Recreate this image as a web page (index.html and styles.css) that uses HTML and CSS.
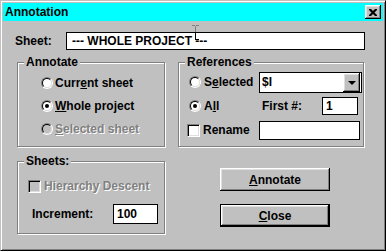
FILE: index.html
```html
<!DOCTYPE html>
<html>
	<head>
		<meta charset="UTF-8">
		<title>Annotation</title>
		<link rel="stylesheet" href="styles.css">
	</head>
	<body>
		<div class="window">
			<div class="titlebar">
				<span class="title">Annotation</span>
				<span class="close-btn">
					<svg width="8" height="7" viewBox="0 0 8 7"><path d="M0 0h2l2 2 2-2h2v1l-2.5 2.5 2.5 2.5v1h-2l-2-2-2 2h-2v-1l2.5-2.5-2.5-2.5z" fill="#000"/></svg>
				</span>
			</div>
			<div class="content">
				<div class="sheet-row">
					<span class="sheet-label">Sheet:</span>
					<div class="field sheet-field">--- WHOLE PROJECT ---</div>
				</div>
				<div class="grid">
					<div class="group">
						<span class="legend">Annotate</span>
						<div class="opts">
							<div class="opt"><span class="radio"></span><span>Curr<u>e</u>nt sheet</span></div>
							<div class="opt"><span class="radio on"></span><span><u>W</u>hole project</span></div>
							<div class="opt dis"><span class="radio off"></span><span><u>S</u>elected sheet</span></div>
						</div>
					</div>
					<div class="group">
						<span class="legend">References</span>
						<div class="refs">
							<div class="opt"><span class="radio"></span><span>S<u>e</u>lected</span></div>
							<div class="combo">
								<span class="combo-text">$I</span>
								<span class="combo-btn"><span class="arrow"></span></span>
							</div>
							<div class="opt"><span class="radio on"></span><span>A<u>l</u>l</span></div>
							<div class="first">
								<span class="first-label">First #:</span>
								<div class="field first-field">1</div>
							</div>
							<div class="opt check-opt"><span class="check"></span><span>Rename</span></div>
							<div class="field rename-field"></div>
						</div>
					</div>
					<div class="group">
						<span class="legend">Sheets:</span>
						<div class="sheets">
							<div class="opt check-opt dis"><span class="check off"></span><span>Hierarchy Descent</span></div>
							<div class="inc-row">
								<span class="inc-label">Increment:</span>
								<div class="field inc-field">100</div>
							</div>
						</div>
					</div>
					<div class="buttons">
						<div class="btn"><span><u>A</u>nnotate</span></div>
						<div class="btn default"><span><u>C</u>lose</span></div>
					</div>
				</div>
			</div>
			<svg class="ibeam" width="9" height="18" viewBox="0 0 9 18">
				<rect x="1" y="1" width="3" height="1" fill="#808080"/>
				<rect x="5" y="1" width="3" height="1" fill="#808080"/>
				<rect x="4" y="2" width="1" height="6" fill="#808080"/>
				<rect x="4" y="8" width="1" height="8" fill="#000"/>
				<rect x="5" y="15" width="3" height="1" fill="#000"/>
			</svg>
		</div>
	</body>
</html>
```
FILE: styles.css
```css
*{
	margin: 0;
	padding: 0;
	box-sizing: border-box;
}
body{
	background: #c0c0c0;
	font: bold 12px "Liberation Sans", Arial, sans-serif;
	color: #000;
}
.window{
	position: relative;
	width: 386px;
	height: 251px;
	background: #c0c0c0;
	border: 1px solid;
	border-color: #c0c0c0 #000 #000 #c0c0c0;
	box-shadow: inset 1px 1px 0 #fff, inset -1px -1px 0 #808080;
	padding: 2px;
}
.titlebar{
	height: 18px;
	background: #00ffff;
	display: flex;
	align-items: center;
	justify-content: space-between;
	padding: 0 2px;
}
.title{
	line-height: 18px;
}
.close-btn{
	width: 16px;
	height: 14px;
	display: flex;
	align-items: center;
	justify-content: center;
	background: #c0c0c0;
	box-shadow: inset -1px -1px 0 #000, inset 1px 1px 0 #fff, inset -2px -2px 0 #808080, inset 2px 2px 0 #dfdfdf;
}
.content{
	padding: 11px 0 0 12px;
}
.sheet-row{
	display: flex;
	align-items: center;
	height: 18px;
}
.sheet-label{
	width: 51px;
}
.field{
	background: #fff;
	border: 1px solid #000;
	height: 18px;
	line-height: 16px;
	padding-left: 5px;
}
.sheet-field{
	width: 299px;
}
.grid{
	display: grid;
	grid-template-columns: 148px 186px;
	grid-template-rows: 85px 73px;
	column-gap: 13px;
	row-gap: 14px;
	margin: 12px 0 0 2px;
}
.group{
	position: relative;
	border: 1px solid #808080;
	box-shadow: 1px 1px 0 #fff, inset 1px 1px 0 #fff;
}
.legend{
	position: absolute;
	top: -8px;
	left: 6px;
	padding: 0 2px;
	line-height: 14px;
	background: #c0c0c0;
}
.opts{
	display: flex;
	flex-direction: column;
	padding: 8px 0 0 23px;
}
.opt{
	display: flex;
	align-items: center;
	height: 23px;
	gap: 1px;
	white-space: nowrap;
}
.dis{
	color: #808080;
	text-shadow: 1px 1px 0 #fff;
}
.radio{
	position: relative;
	flex: none;
	width: 12px;
	height: 12px;
	border-radius: 50%;
	border: 1px solid;
	border-color: #808080 #fff #fff #808080;
	margin-right: 1px;
}
.radio::before{
	content: "";
	position: absolute;
	left: 0;
	top: 0;
	width: 10px;
	height: 10px;
	border-radius: 50%;
	border: 1px solid;
	border-color: #000 #dfdfdf #dfdfdf #000;
	background: #fff;
	box-sizing: border-box;
}
.radio.off::before{
	background: #c0c0c0;
}
.radio.on::after{
	content: "";
	position: absolute;
	left: 3px;
	top: 3px;
	width: 4px;
	height: 4px;
	border-radius: 50%;
	background: #000;
}
.check{
	flex: none;
	width: 13px;
	height: 13px;
	background: #fff;
	border: 1px solid;
	border-color: #808080 #fff #fff #808080;
	box-shadow: inset 1px 1px 0 #000, inset -1px -1px 0 #dfdfdf;
}
.check.off{
	background: #c0c0c0;
}
.check-opt{
	gap: 3px;
}
.refs{
	display: grid;
	grid-template-columns: 70px auto;
	grid-auto-rows: 22px;
	row-gap: 2px;
	align-items: center;
	padding: 8px 0 0 10px;
}
.refs .opt{
	gap: 2px;
}
.refs .check-opt{
	margin-left: -2px;
	gap: 3px;
}
.combo{
	display: flex;
	align-items: center;
	justify-content: space-between;
	width: 103px;
	height: 21px;
	border: 1px solid #000;
	background: #fff;
	padding: 0 1px 0 2px;
}
.combo-btn{
	display: flex;
	align-items: center;
	justify-content: center;
	width: 17px;
	height: 19px;
	background: #c0c0c0;
	box-shadow: inset -1px -1px 0 #000, inset 1px 1px 0 #fff, inset -2px -2px 0 #808080, inset 2px 2px 0 #dfdfdf;
}
.arrow{
	width: 0;
	height: 0;
	border-left: 4px solid transparent;
	border-right: 4px solid transparent;
	border-top: 4px solid #000;
	margin-top: 1px;
}
.first{
	display: flex;
	align-items: center;
	padding-left: 3px;
}
.first-label{
	width: 60px;
}
.first-field{
	width: 36px;
	padding-left: 3px;
}
.rename-field{
	width: 101px;
	height: 19px;
}
.sheets{
	display: flex;
	flex-direction: column;
	gap: 6px;
	padding: 13px 0 0 10px;
}
.sheets .opt{
	height: 22px;
}
.inc-row{
	display: flex;
	align-items: center;
	height: 22px;
	padding-left: 4px;
}
.inc-label{
	width: 81px;
}
.inc-field{
	width: 45px;
	height: 20px;
	line-height: 18px;
	padding-left: 3px;
}
.buttons{
	display: flex;
	flex-direction: column;
	gap: 13px;
	padding: 7px 0 0 42px;
}
.btn{
	display: flex;
	align-items: center;
	justify-content: center;
	width: 110px;
	height: 23px;
	background: #c0c0c0;
	box-shadow: inset -1px -1px 0 #000, inset 1px 1px 0 #fff, inset -2px -2px 0 #808080, inset 2px 2px 0 #dfdfdf;
}
.btn.default{
	border: 1px solid #000;
}
.ibeam{
	position: absolute;
	left: 190px;
	top: 23px;
}
```
